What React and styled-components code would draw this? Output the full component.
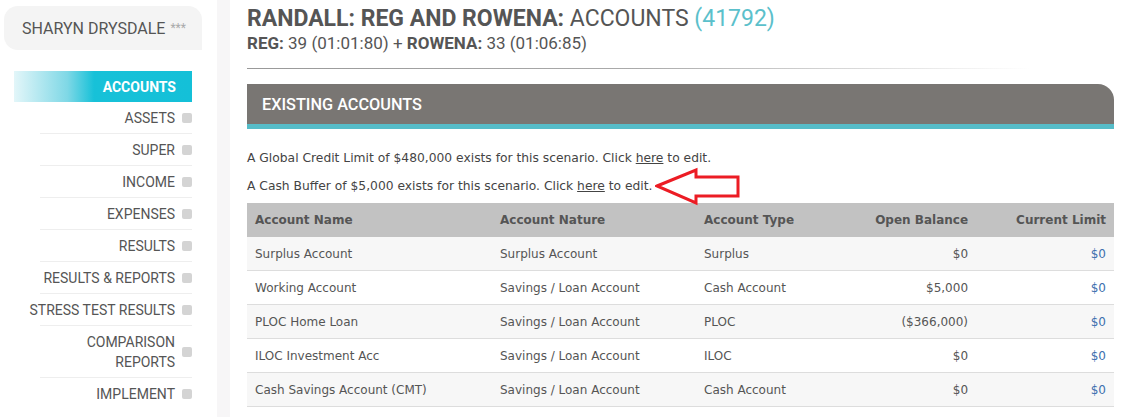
import React from "react";
import styled, { createGlobalStyle } from "styled-components";

const Global = createGlobalStyle`
  html, body { margin: 0; padding: 0; background: #fff; }
  body { font-family: "Open Sans", sans-serif; }
`;

const Page = styled.div`
  display: flex;
  width: 1124px;
  height: 417px;
  overflow: hidden;
  background: #fff;
`;

const Sidebar = styled.aside`
  width: 217px;
  flex-shrink: 0;
  padding-top: 6px;
  box-sizing: border-box;
`;

const Gutter = styled.div`
  width: 13px;
  flex-shrink: 0;
  background: #f7f6f7;
`;

const UserBox = styled.div`
  margin-left: 4px;
  width: 198px;
  height: 44px;
  background: #f4f4f4;
  border-radius: 14px 14px 0 14px;
  display: flex;
  align-items: center;
  padding-left: 18px;
  box-sizing: border-box;
  font-family: "Roboto", sans-serif;
  font-size: 16px;
  color: #555;
  white-space: nowrap;
`;

const Stars = styled.span`
  color: #aaa;
  font-size: 12px;
  margin-left: 5px;
`;

const Nav = styled.nav`
  margin-top: 21px;
  margin-left: 14px;
  width: 178px;
  display: flex;
  flex-direction: column;
`;

const ActiveItem = styled.div`
  height: 31px;
  display: flex;
  align-items: center;
  justify-content: flex-end;
  padding-right: 16px;
  background: linear-gradient(to right, #e3f6f9 0%, #7fd8e6 30%, #17c1d8 45%, #14c0d8 100%);
  color: #fff;
  font-family: "Roboto", sans-serif;
  font-weight: 700;
  font-size: 14px;
`;

const NavItem = styled.div`
  margin-left: 26px;
  height: ${(p) => (p.$tall ? "52px" : "32px")};
  border-bottom: 1px solid #eeeeee;
  box-sizing: border-box;
  display: flex;
  align-items: center;
  justify-content: flex-end;
  gap: 7px;
  font-family: "Roboto", sans-serif;
  font-size: 14px;
  color: #555;
  white-space: nowrap;
  &:last-child { border-bottom: none; }
`;

const NavLabel = styled.span`
  text-align: right;
  line-height: 20px;
`;

const Square = styled.span`
  width: 10px;
  height: 10px;
  border-radius: 2px;
  background: #d4d4d4;
  flex-shrink: 0;
`;

const Main = styled.main`
  flex: 1;
  padding: 5px 10px 0 17px;
  position: relative;
`;

const Title = styled.h1`
  margin: 0;
  font-family: "Roboto", sans-serif;
  font-size: 23px;
  font-weight: 400;
  color: #555;
  line-height: 28px;
  b { font-weight: 700; }
`;

const Count = styled.span`
  color: #5bc0cb;
`;

const Sub = styled.div`
  font-family: "Roboto", sans-serif;
  font-size: 17px;
  color: #555;
  line-height: 20px;
  b { font-weight: 700; }
`;

const Rule = styled.div`
  margin-top: 15px;
  height: 1px;
  width: 783px;
  background: linear-gradient(to right, #999 0%, #aaa 50%, #fff 100%);
`;

const PanelHead = styled.div`
  margin-top: 15px;
  height: 40px;
  background: #797673;
  border-top-right-radius: 16px;
  border-bottom: 5px solid #56bcc8;
  display: flex;
  align-items: center;
  padding-left: 15px;
  color: #fff;
  font-family: "Roboto", sans-serif;
  font-size: 16.3px;
  font-weight: 500;
`;

const Notes = styled.div`
  padding-top: 15px;
`;

const Note = styled.p`
  margin: 0;
  font-family: "DejaVu Sans", Verdana, sans-serif;
  font-size: 12.3px;
  color: #444;
  line-height: 28px;
  a { color: #444; text-decoration: underline; }
`;

const Table = styled.table`
  margin-top: 3px;
  width: 100%;
  border-collapse: collapse;
  font-family: "DejaVu Sans", Verdana, sans-serif;
  font-size: 12px;
  color: #555;
`;

const Th = styled.th`
  background: #c2c2c2;
  height: 34px;
  padding: 0 8px;
  text-align: ${(p) => (p.$right ? "right" : "left")};
  font-weight: 700;
  color: #555;
`;

const Tr = styled.tr`
  background: ${(p) => (p.$odd ? "#f7f7f7" : "#fff")};
  border-bottom: 1px solid #dddddd;
`;

const Td = styled.td`
  height: 33px;
  padding: 0 8px;
  text-align: ${(p) => (p.$right ? "right" : "left")};
  color: ${(p) => (p.$blue ? "#3d6fae" : "#555")};
`;

const Arrow = styled.svg`
  position: absolute;
  left: 425px;
  top: 167px;
`;

const navItems = [
  "ASSETS",
  "SUPER",
  "INCOME",
  "EXPENSES",
  "RESULTS",
  "RESULTS & REPORTS",
  "STRESS TEST RESULTS",
  ["COMPARISON", "REPORTS"],
  "IMPLEMENT",
];

const rows = [
  ["Surplus Account", "Surplus Account", "Surplus", "$0", "$0"],
  ["Working Account", "Savings / Loan Account", "Cash Account", "$5,000", "$0"],
  ["PLOC Home Loan", "Savings / Loan Account", "PLOC", "($366,000)", "$0"],
  ["ILOC Investment Acc", "Savings / Loan Account", "ILOC", "$0", "$0"],
  ["Cash Savings Account (CMT)", "Savings / Loan Account", "Cash Account", "$0", "$0"],
];

export default function App() {
  return (
    <Page>
      <Global />
      <Sidebar>
        <UserBox>
          SHARYN DRYSDALE<Stars>***</Stars>
        </UserBox>
        <Nav>
          <ActiveItem>ACCOUNTS</ActiveItem>
          {navItems.map((it, i) => (
            <NavItem key={i} $tall={Array.isArray(it)}>
              <NavLabel>
                {Array.isArray(it) ? (
                  <>
                    {it[0]}
                    <br />
                    {it[1]}
                  </>
                ) : (
                  it
                )}
              </NavLabel>
              <Square />
            </NavItem>
          ))}
        </Nav>
      </Sidebar>
      <Gutter />
      <Main>
        <Title>
          <b>RANDALL: REG AND ROWENA:</b> ACCOUNTS <Count>(41792)</Count>
        </Title>
        <Sub>
          <b>REG:</b> 39 (01:01:80) + <b>ROWENA:</b> 33 (01:06:85)
        </Sub>
        <Rule />
        <PanelHead>EXISTING ACCOUNTS</PanelHead>
        <Notes>
          <Note>
            A Global Credit Limit of $480,000 exists for this scenario. Click <a href="#">here</a> to edit.
          </Note>
          <Note>
            A Cash Buffer of $5,000 exists for this scenario. Click <a href="#">here</a> to edit.
          </Note>
        </Notes>
        <Table>
          <thead>
            <tr>
              <Th style={{ width: "229px" }}>Account Name</Th>
              <Th style={{ width: "188px" }}>Account Nature</Th>
              <Th>Account Type</Th>
              <Th $right>Open Balance</Th>
              <Th $right>Current Limit</Th>
            </tr>
          </thead>
          <tbody>
            {rows.map((r, i) => (
              <Tr key={i} $odd={i % 2 === 0}>
                <Td>{r[0]}</Td>
                <Td>{r[1]}</Td>
                <Td>{r[2]}</Td>
                <Td $right>{r[3]}</Td>
                <Td $right $blue>{r[4]}</Td>
              </Tr>
            ))}
          </tbody>
        </Table>
        <Arrow width="88" height="40" viewBox="0 0 88 40">
          <polygon
            points="2,19 41,3 41,10 83,10 83,29 41,29 41,36"
            fill="#fff"
            stroke="#ec1c24"
            strokeWidth="3"
            strokeLinejoin="miter"
          />
        </Arrow>
      </Main>
    </Page>
  );
}
